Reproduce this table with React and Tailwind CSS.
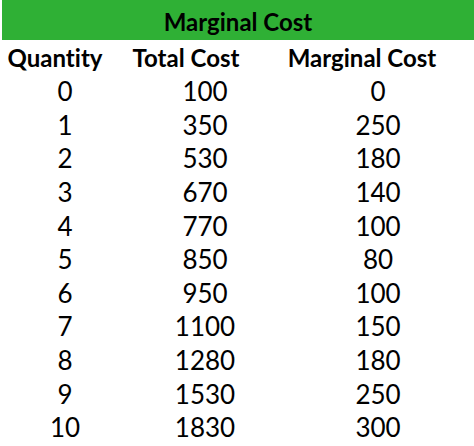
import { Fragment } from "react";

export default function App() {
  const rows = [
    [0, 100, 0],
    [1, 350, 250],
    [2, 530, 180],
    [3, 670, 140],
    [4, 770, 100],
    [5, 850, 80],
    [6, 950, 100],
    [7, 1100, 150],
    [8, 1280, 180],
    [9, 1530, 250],
    [10, 1830, 300],
  ];
  return (
    <div className="w-[474px] h-[446px] bg-white text-black overflow-hidden [font-variant-ligatures:none]" style={{ fontFamily: "Lato, 'Open Sans', sans-serif" }}>
      <div className="ml-[2px] h-[40px] bg-[#2fb035] flex items-center justify-center pt-[3px]">
        <span className="font-bold text-[24px] leading-none">Marginal Cost</span>
      </div>
      <div className="grid grid-cols-[130px_150px_194px]">
        <div className="h-[35px] flex items-center justify-center pr-[20px] font-bold text-[24px]">Quantity</div>
        <div className="h-[35px] flex items-center justify-center pr-[38px] font-bold text-[24px]">Total Cost</div>
        <div className="h-[35px] flex items-center justify-center pr-[30px] font-bold text-[24px]">Marginal Cost</div>
        {rows.map((r) => (
          <Fragment key={r[0]}>
            <div className="h-[33.6px] flex items-center justify-center text-[26px]">{r[0]}</div>
            <div className="h-[33.6px] flex items-center justify-center text-[26px]">{r[1]}</div>
            <div className="h-[33.6px] flex items-center justify-center pl-[2px] text-[26px]">{r[2]}</div>
          </Fragment>
        ))}
      </div>
    </div>
  );
}
